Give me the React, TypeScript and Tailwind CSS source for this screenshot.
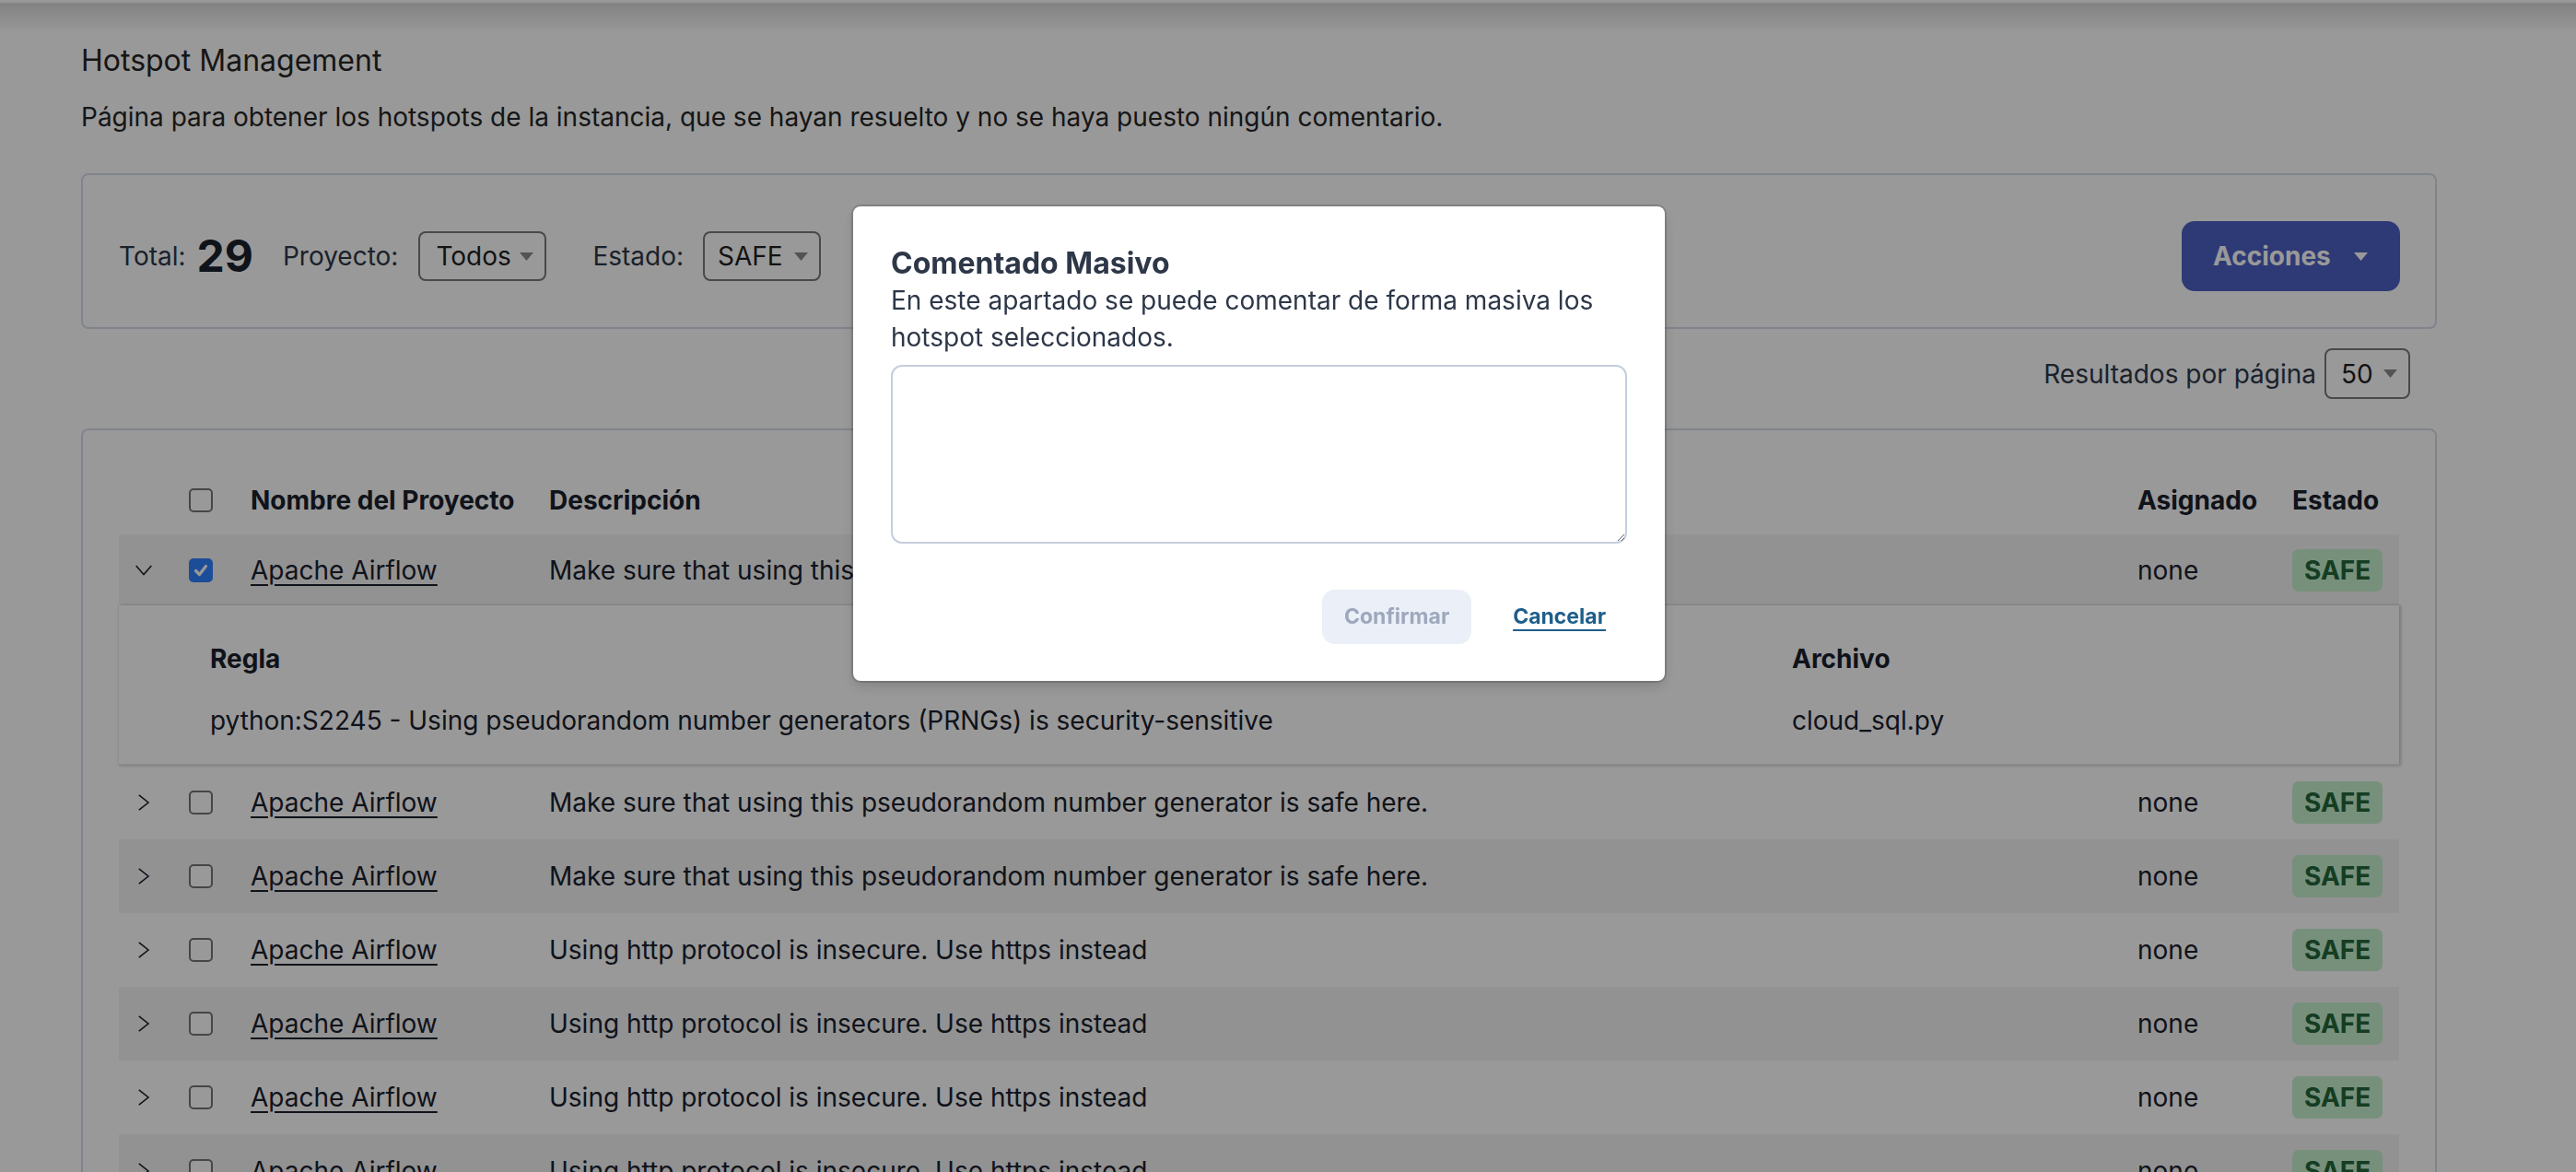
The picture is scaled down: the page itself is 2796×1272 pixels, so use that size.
import React from "react";

function Caret({ className }: { className?: string }) {
  return (
    <svg width="15" height="9" viewBox="0 0 15 9" className={className}>
      <path d="M0 0H15L7.5 9Z" fill="currentColor" />
    </svg>
  );
}

function ChevronDown() {
  return (
    <svg width="20" height="20" viewBox="0 0 20 20" className="text-[#1a202c]">
      <polyline points="1.7,5 10,14.5 18.3,5" fill="none" stroke="currentColor" strokeWidth="1.6" />
    </svg>
  );
}

function ChevronRight() {
  return (
    <svg width="20" height="20" viewBox="0 0 20 20" className="text-[#1a202c]">
      <polyline points="4.8,1.8 15,10 4.8,18.2" fill="none" stroke="currentColor" strokeWidth="1.6" />
    </svg>
  );
}

function Checkbox({ checked }: { checked?: boolean }) {
  if (checked) {
    return (
      <span className="flex h-[26px] w-[26px] items-center justify-center rounded-[5px] bg-[#2f80ff]">
        <svg width="18" height="18" viewBox="0 0 18 18">
          <polyline points="3.5,9.5 7.5,13.5 14.5,4.5" fill="none" stroke="#ffffff" strokeWidth="3.2" strokeLinecap="round" strokeLinejoin="round" />
        </svg>
      </span>
    );
  }
  return <span className="block h-[26px] w-[26px] rounded-[5px] border-2 border-[#767676] bg-white" />;
}

type RowProps = {
  desc: string;
  striped: boolean;
  expanded?: boolean;
  checked?: boolean;
  short?: boolean;
};

function Row({ desc, striped, expanded, checked, short }: RowProps) {
  return (
    <div
      className={`grid grid-cols-[76px_67px_324px_1fr_168px_116px] items-center ${short ? "h-[77px]" : "h-[80px]"} ${striped ? "bg-[#f4f4f4]" : ""}`}
    >
      <div className="flex items-center pl-[17px]">{expanded ? <ChevronDown /> : <ChevronRight />}</div>
      <div className="flex items-center">
        <Checkbox checked={checked} />
      </div>
      <div>
        <span className="underline decoration-[2px] underline-offset-[5px]">Apache Airflow</span>
      </div>
      <div className="whitespace-nowrap">{desc}</div>
      <div>none</div>
      <div>
        <span className="inline-flex h-[46px] items-center rounded-[7px] bg-[#c6f0cf] px-[13px] font-bold text-[#23663a]">
          SAFE
        </span>
      </div>
    </div>
  );
}

export default function App() {
  const prng = "Make sure that using this pseudorandom number generator is safe here.";
  const http = "Using http protocol is insecure. Use https instead";
  const rest = [
    { desc: prng, striped: false },
    { desc: prng, striped: true },
    { desc: http, striped: false },
    { desc: http, striped: true },
    { desc: http, striped: false },
    { desc: http, striped: true },
    { desc: http, striped: false },
  ];

  return (
    <div className="relative h-screen w-full overflow-hidden bg-white bg-[linear-gradient(to_bottom,#ffffff_0px,#ffffff_2px,#dadada_4px,#ffffff_36px,#ffffff_100%)] font-[Inter,'Noto_Sans',sans-serif] text-[28px] text-[#1a202c]">
      <div className="w-[2733px] px-[88px] pt-[42px]">
        <h1 className="text-[32px] leading-[48px] text-[#262626]">Hotspot Management</h1>
        <p className="mt-[17px] text-[28px] leading-[40px] text-[#262626]">
          Página para obtener los hotspots de la instancia, que se hayan resuelto y no se haya puesto ningún comentario.
        </p>

        <div className="mt-[41px] flex items-center rounded-[8px] border-2 border-[#d6dce8] pb-[39px] pl-[39px] pr-[38px] pt-[50px] text-[#2d3748]">
          <span className="leading-[40px]">Total:</span>
          <span className="ml-[12px] text-[48px] font-bold leading-[56px] text-[#1a202c]">29</span>
          <span className="ml-[32px] leading-[40px]">Proyecto:</span>
          <div className="ml-[22px] flex h-[54px] w-[139px] items-center justify-between rounded-[8px] border-2 border-[#7a7a7a] pl-[17px] pr-[12px] text-[#1f1f1f]">
            <span>Todos</span>
            <Caret className="text-[#8a8a8a]" />
          </div>
          <span className="ml-[50px] leading-[40px]">Estado:</span>
          <div className="ml-[21px] flex h-[54px] w-[128px] items-center justify-between rounded-[8px] border-2 border-[#7a7a7a] pl-[14px] pr-[12px] text-[#1f1f1f]">
            <span>SAFE</span>
            <Caret className="text-[#8a8a8a]" />
          </div>
          <div className="flex-1" />
          <button className="flex h-[76px] w-[237px] items-center justify-between rounded-[14px] bg-[#4d61c5] pl-[34px] pr-[35px] font-bold text-white">
            <span>Acciones</span>
            <Caret className="text-white" />
          </button>
        </div>

        <div className="mt-[21px] flex h-[55px] items-center justify-end pr-[29px] text-[#2d3748]">
          <span>Resultados por página</span>
          <div className="ml-[9px] flex h-[55px] w-[93px] items-center justify-between rounded-[8px] border-2 border-[#7a7a7a] pl-[16px] pr-[12px] text-[#1f1f1f]">
            <span>50</span>
            <Caret className="text-[#8a8a8a]" />
          </div>
        </div>

        <div className="mt-[32px] rounded-[8px] border-2 border-[#d6dce8] px-[39px] pt-[38px]">
          <div className="grid h-[75px] grid-cols-[76px_67px_324px_1fr_168px_116px] items-center font-bold">
            <div />
            <div className="flex items-center">
              <Checkbox />
            </div>
            <div>Nombre del Proyecto</div>
            <div>Descripción</div>
            <div>Asignado</div>
            <div>Estado</div>
          </div>

          <Row desc={prng} striped expanded checked short />

          <div className="h-[174px] border-b-2 border-[#e6e6e6] bg-white pl-[99px] pt-[38px] shadow-[-1px_0_2px_rgba(0,0,0,0.08),2px_0_3px_rgba(0,0,0,0.22)]">
            <div className="grid grid-cols-[1717px_1fr]">
              <div className="font-bold leading-[40px]">Regla</div>
              <div className="font-bold leading-[40px]">Archivo</div>
              <div className="mt-[27px] leading-[40px]">
                python:S2245 - Using pseudorandom number generators (PRNGs) is security-sensitive
              </div>
              <div className="mt-[27px] leading-[40px]">cloud_sql.py</div>
            </div>
          </div>

          {rest.map((r, i) => (
            <Row key={i} desc={r.desc} striped={r.striped} />
          ))}
        </div>
      </div>

      <div className="fixed inset-0 bg-black/40" />

      <div className="fixed inset-y-0 left-0 flex w-[2733px] items-start justify-center pt-[224px]">
        <div className="w-[881px] rounded-[8px] bg-white px-[41px] pb-[40px] pt-[42px] shadow-[0_0_0_2px_rgba(0,0,0,0.14),0_6px_14px_rgba(0,0,0,0.15)]">
          <h2 className="text-[32px] font-bold leading-[40px] text-[#2d3748]">Comentado Masivo</h2>
          <p className="text-[28px] leading-[40px] text-[#2d3748]">
            En este apartado se puede comentar de forma masiva los
            <br />
            hotspot seleccionados.
          </p>
          <textarea className="mt-[10px] block h-[194px] w-full resize-y rounded-[12px] border-2 border-[#c5cedd] bg-white p-[16px] text-[28px] outline-none" />
          <div className="mt-[50px] flex items-center justify-end gap-[22px]">
            <button className="h-[59px] w-[162px] rounded-[14px] bg-[#ebeff7] text-[23px] font-bold text-[#9ea8bd]">
              Confirmar
            </button>
            <button className="h-[59px] px-[23px] text-[23px] font-bold text-[#1f5e8a] underline decoration-[2px] underline-offset-[6px]">
              Cancelar
            </button>
          </div>
        </div>
      </div>
    </div>
  );
}
